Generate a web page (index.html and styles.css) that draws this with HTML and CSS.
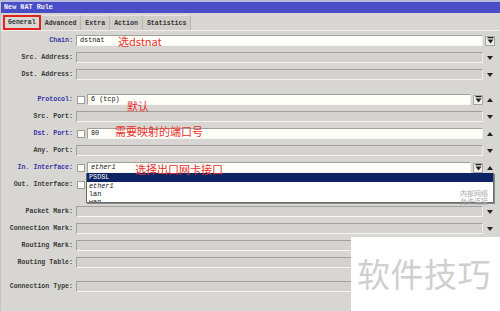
FILE: index.html
```html
<!DOCTYPE html>
<html>
<head>
<meta charset="utf-8">
<link rel="stylesheet" href="styles.css">
</head>
<body>
<div class="win">
  <div class="title">New NAT Rule</div>
  <div class="tabbar">
    <div class="tab active">General</div>
    <div class="tab">Advanced</div>
    <div class="tab">Extra</div>
    <div class="tab">Action</div>
    <div class="tab">Statistics</div>
  </div>
  <div class="form">
    <div class="row">
      <div class="lbl blue">Chain:</div>
      <div class="field"><div class="inp white">dstnat</div></div>
      <div class="side start"><span class="btn"><svg width="7" height="7" viewBox="0 0 7 7"><rect x="0.5" y="0" width="6" height="1.3" fill="#222"/><path d="M0.5 2.5 H6.5 L3.5 6.5 Z" fill="#222"/></svg></span></div>
    </div>
    <div class="row">
      <div class="lbl">Src. Address:</div>
      <div class="field"><div class="inp"></div></div>
      <div class="side"><span class="down"></span></div>
    </div>
    <div class="row">
      <div class="lbl">Dst. Address:</div>
      <div class="field"><div class="inp"></div></div>
      <div class="side"><span class="down"></span></div>
    </div>

    <div class="row group">
      <div class="lbl blue">Protocol:</div>
      <div class="field"><span class="chk"></span><div class="inp white">6 (tcp)</div><span class="btn"><svg width="7" height="7" viewBox="0 0 7 7"><rect x="0.5" y="0" width="6" height="1.3" fill="#222"/><path d="M0.5 2.5 H6.5 L3.5 6.5 Z" fill="#222"/></svg></span></div>
      <div class="side"><span class="up"></span></div>
    </div>
    <div class="row">
      <div class="lbl">Src. Port:</div>
      <div class="field"><div class="inp"></div></div>
      <div class="side"><span class="down"></span></div>
    </div>
    <div class="row">
      <div class="lbl blue">Dst. Port:</div>
      <div class="field"><span class="chk"></span><div class="inp white">80</div></div>
      <div class="side"><span class="up"></span></div>
    </div>
    <div class="row">
      <div class="lbl">Any. Port:</div>
      <div class="field"><div class="inp"></div></div>
      <div class="side"><span class="down"></span></div>
    </div>
    <div class="row">
      <div class="lbl blue">In. Interface:</div>
      <div class="field"><span class="chk"></span><div class="inp white"><i>ether1</i></div><span class="btn"><svg width="7" height="7" viewBox="0 0 7 7"><rect x="0.5" y="0" width="6" height="1.3" fill="#222"/><path d="M0.5 2.5 H6.5 L3.5 6.5 Z" fill="#222"/></svg></span>
        <div class="list">
          <div class="item sel">PSDSL</div>
          <div class="item"><i>ether1</i></div>
          <div class="item">lan</div>
          <div class="item last">wan</div>
        </div>
        <div class="ghost"><span>内部网络</span><span>允许连接</span></div>
      </div>
      <div class="side"><span class="up"></span></div>
    </div>
    <div class="row">
      <div class="lbl">Out. Interface:</div>
      <div class="field"><span class="chk"></span><div class="inp"></div></div>
      <div class="side"><span class="down"></span></div>
    </div>

    <div class="row group2">
      <div class="lbl">Packet Mark:</div>
      <div class="field"><div class="inp"></div></div>
      <div class="side"><span class="down"></span></div>
    </div>
    <div class="row">
      <div class="lbl">Connection Mark:</div>
      <div class="field"><div class="inp"></div></div>
      <div class="side"><span class="down"></span></div>
    </div>
    <div class="row">
      <div class="lbl">Routing Mark:</div>
      <div class="field"><div class="inp"></div></div>
      <div class="side"><span class="down"></span></div>
    </div>
    <div class="row">
      <div class="lbl">Routing Table:</div>
      <div class="field"><div class="inp"></div></div>
      <div class="side"><span class="down"></span></div>
    </div>

    <div class="row group3">
      <div class="lbl">Connection Type:</div>
      <div class="field"><div class="inp"></div></div>
      <div class="side"><span class="down"></span></div>
    </div>
  </div>

  <div class="note n1">选dstnat</div>
  <div class="note n2">默认</div>
  <div class="note n3">需要映射的端口号</div>
  <div class="note n4">选择出口网卡接口</div>

  <div class="mark">软件技巧</div>
</div>
</body>
</html>
```

FILE: styles.css
```css
* { box-sizing: border-box; }
html, body {
  margin: 0;
  padding: 0;
  width: 500px;
  height: 311px;
  overflow: hidden;
  background: #d8d6d2;
}
.win {
  position: relative;
  width: 500px;
  height: 311px;
  font-family: "Liberation Mono", "DejaVu Sans Mono", monospace;
  font-size: 6.6px;
  font-weight: bold;
  color: #3a3a3a;
  border-left: 1px solid #c4c2be;
}
.title {
  height: 13px;
  border-top: 2px solid #b9bbdc;
  background: #4a4ec6;
  color: #f2f2ff;
  font-size: 6.8px;
  line-height: 11px;
  padding-left: 3px;
}
.tabbar {
  display: flex;
  align-items: stretch;
  height: 18px;
  padding: 2px 0 0 2px;
  border-bottom: 1px solid #efeeeb;
}
.tab {
  display: flex;
  align-items: center;
  padding: 0 4px;
  background: #d1cec9;
  border-right: 1px solid #b9b6b1;
  border-top: 1px solid #e6e4e0;
  color: #333;
}
.tab.active {
  background: #dbd9d5;
  border: 2px solid #e0231f;
  padding: 0 3px;
}
.form {
  padding-top: 1px;
  display: flex;
  flex-direction: column;
}
.row {
  display: grid;
  grid-template-columns: 75px 408px 1fr;
  height: 17px;
  align-items: center;
}
.row.group { margin-top: 8px; }
.row.group2 { margin-top: 10px; }
.row.group3 { margin-top: 7px; }
.lbl {
  text-align: right;
  padding-right: 3px;
  white-space: nowrap;
}
.lbl.blue { color: #3838aa; }
.field {
  position: relative;
  display: flex;
  align-items: center;
  gap: 2px;
  padding-right: 1px;
}
.inp {
  flex: 1;
  height: 11px;
  background: #d4d2ce;
  border: 1px solid;
  border-color: #a3a19d #ecebe8 #f6f5f2 #a3a19d;
  font-weight: normal;
  color: #111;
  font-size: 6.8px;
  line-height: 9px;
  padding-left: 3px;
  white-space: nowrap;
}
.inp.white { background: #fffff9; }
.chk {
  width: 8px;
  height: 8px;
  margin-left: 1px;
  background: #fffffb;
  border: 1px solid #9e9c98;
  flex: none;
}
.btn {
  width: 10px;
  height: 10px;
  flex: none;
  display: flex;
  align-items: center;
  justify-content: center;
  background: #efeee9;
  border: 1px solid #a9a7a3;
}
.side {
  display: flex;
  justify-content: center;
  padding-right: 4px;
}
.side.start {
  justify-content: flex-start;
  padding-left: 1px;
}
.down {
  width: 0;
  height: 0;
  border-left: 3px solid transparent;
  border-right: 3px solid transparent;
  border-top: 4px solid #222;
}
.up {
  width: 0;
  height: 0;
  border-left: 3px solid transparent;
  border-right: 3px solid transparent;
  border-bottom: 4px solid #222;
}
.list {
  position: absolute;
  left: 10px;
  top: 11px;
  width: 408px;
  height: 30px;
  background: #ffffff;
  border: 1px solid #6b6b6b;
  border-top: none;
  box-shadow: 1px 1px 0 #8a8a8a;
  overflow: hidden;
  z-index: 2;
}
.item {
  height: 8px;
  line-height: 8px;
  padding-left: 2px;
  font-weight: normal;
  color: #111;
  font-size: 6.8px;
}
.item.last { height: 4px; overflow: hidden; }
.item.sel {
  background: #0c2464;
  color: #fff;
  height: 9px;
  line-height: 9px;
}
.ghost {
  position: absolute;
  right: -4px;
  top: 27px;
  display: flex;
  flex-direction: column;
  font-family: "Noto Sans CJK SC", sans-serif;
  font-weight: normal;
  font-size: 7px;
  line-height: 8px;
  color: #a8a8a8;
  z-index: 3;
}
.note {
  position: absolute;
  font-family: "Noto Sans CJK SC", sans-serif;
  font-weight: normal;
  font-size: 11px;
  line-height: 12px;
  color: #e8312c;
  white-space: nowrap;
  z-index: 3;
}
.n1 { left: 117px; top: 35px; }
.n2 { left: 126px; top: 100px; }
.n3 { left: 114px; top: 125px; }
.n4 { left: 134px; top: 163px; }
.mark {
  position: absolute;
  left: 350px;
  top: 237px;
  right: 0;
  bottom: 0;
  background: #ffffff;
  display: flex;
  align-items: center;
  padding-left: 6px;
  padding-bottom: 2px;
  font-family: "Noto Sans CJK SC", sans-serif;
  font-weight: normal;
  font-size: 33px;
  letter-spacing: 0.5px;
  color: #cfcfcf;
  z-index: 4;
}
```
